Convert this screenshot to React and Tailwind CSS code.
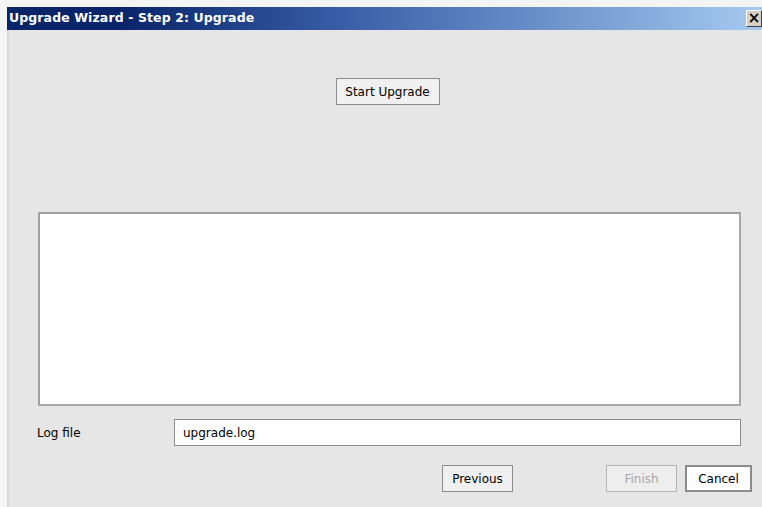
export default function App() {
  const ui = { fontFamily: '"DejaVu Sans", "Liberation Sans", sans-serif' };
  return (
    <div className="w-[762px] h-[507px] bg-[#f4f4f4] overflow-hidden flex" style={ui}>
      {/* left frame edge */}
      <div className="w-[7px] shrink-0 bg-[#f4f4f4]" />
      <div className="flex-1 flex flex-col pt-[7px]">
        {/* title bar */}
        <div className="h-[23px] flex items-center pl-[2px] bg-gradient-to-r from-[#0a246a] from-15% via-[#3a5fa8] via-45% to-[#a6caf0]">
          <span className="text-white font-bold text-[12.5px] tracking-[0.1px]">Upgrade Wizard - Step 2: Upgrade</span>
          <div className="ml-auto w-[16px] h-[17px] bg-[#d4d0c8] border-t border-l border-white border-r border-b border-r-[#404040] border-b-[#404040] flex items-center justify-center text-[15px] font-bold leading-none text-black">
            ×
          </div>
        </div>
        {/* body */}
        <div className="flex-1 bg-[#e6e6e6] border-l-2 border-[#d8d8d4] flex flex-col">
          <div className="flex justify-center pt-[48px] pl-[4px]">
            <button className="h-[27px] px-[8px] w-[104px] bg-[#f0f0f0] border border-[#8c8c8c] text-[12px] text-black">
              Start Upgrade
            </button>
          </div>
          <div className="mt-[107px] ml-[29px] mr-[21px] h-[194px] bg-white border-2 border-t-[#a0a0a0] border-l-[#a0a0a0] border-r-[#a8a8a8] border-b-[#a8a8a8]" />
          <div className="flex items-center mt-[13px] ml-[28px] mr-[21px]">
            <span className="w-[137px] text-[12px] text-black">Log file</span>
            <div className="flex-1 h-[27px] bg-white border border-[#8c8c8c] flex items-center px-[8px] text-[12px] text-black">
              upgrade.log
            </div>
          </div>
          <div className="flex items-center mt-[19px] pl-[433px]">
            <button className="h-[27px] w-[71px] bg-[#f0f0f0] border border-[#8c8c8c] text-[12px] text-black">
              Previous
            </button>
            <button className="ml-[93px] h-[27px] w-[71px] bg-[#eeeeee] border border-[#b4b4b4] text-[12px] text-[#a8a8a8]">
              Finish
            </button>
            <button className="ml-[8px] h-[27px] w-[67px] bg-white border-2 border-[#8c8c8c] text-[12px] text-black">
              Cancel
            </button>
          </div>
        </div>
      </div>
    </div>
  );
}
